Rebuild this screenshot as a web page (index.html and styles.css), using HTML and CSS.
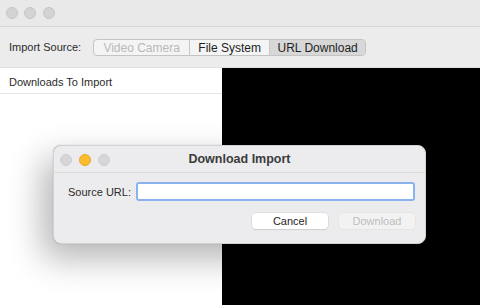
FILE: index.html
```html
<!DOCTYPE html>
<html lang="en">
<head>
    <meta charset="UTF-8">
    <title>Import</title>
    <link rel="stylesheet" href="styles.css">
</head>
<body>
    <div class="window">
        <div class="titlebar">
            <span class="light"></span>
            <span class="light"></span>
            <span class="light"></span>
        </div>

        <div class="toolbar">
            <span class="label">Import Source:</span>
            <div class="segmented">
                <div class="segment disabled">Video Camera</div>
                <div class="segment">File System</div>
                <div class="segment selected">URL Download</div>
            </div>
        </div>

        <div class="content">
            <div class="list">
                <div class="list-header">Downloads To Import</div>
            </div>
            <div class="preview"></div>
        </div>
    </div>

    <div class="dialog">
        <div class="dialog-titlebar">
            <div class="lights">
                <span class="light small"></span>
                <span class="light small yellow"></span>
                <span class="light small"></span>
            </div>
            <div class="dialog-title">Download Import</div>
        </div>
        <div class="dialog-body">
            <div class="field">
                <label for="sourceUrl">Source URL:</label>
                <input type="text" id="sourceUrl">
            </div>
            <div class="buttons">
                <button class="btn">Cancel</button>
                <button class="btn disabled">Download</button>
            </div>
        </div>
    </div>
</body>
</html>
```

FILE: styles.css
```css
body {
    margin: 0;
    width: 480px;
    height: 305px;
    overflow: hidden;
    position: relative;
    font-family: "Liberation Sans", Arial, sans-serif;
    font-size: 11px;
    color: #262626;
    background: #ececec;
}

.window {
    display: flex;
    flex-direction: column;
    height: 305px;
}

.titlebar {
    height: 26px;
    background: #e9e9e9;
    border-bottom: 1px solid #d6d6d6;
    display: flex;
    align-items: center;
    gap: 6.5px;
    padding-left: 5.5px;
}

.light {
    width: 10px;
    height: 10px;
    border-radius: 50%;
    background: #d3d3d3;
    border: 1px solid #c6c6c6;
    box-sizing: content-box;
}

.toolbar {
    height: 40px;
    background: #ececec;
    display: flex;
    align-items: center;
    padding-left: 9px;
    gap: 12px;
}

.label {
    color: #2b2b2b;
}

.segmented {
    display: flex;
    height: 15px;
    border: 1px solid #c4c4c4;
    border-radius: 4px;
    background: #f4f4f4;
    overflow: hidden;
    margin-top: 1px;
}

.segment {
    display: flex;
    align-items: center;
    justify-content: center;
    width: 80px;
    box-sizing: border-box;
    white-space: nowrap;
    border-left: 1px solid #c8c8c8;
    color: #1e1e1e;
    font-size: 12px;
}

.segment:first-child {
    border-left: none;
    width: 95px;
}

.segment.disabled {
    color: #b9b9b9;
}

.segment.selected {
    background: #d7d7d7;
    width: 96px;
}

.content {
    flex: 1;
    display: flex;
    border-top: 1px solid #dedede;
}

.list {
    width: 222px;
    background: #ffffff;
}

.list-header {
    height: 25px;
    line-height: 29px;
    padding-left: 9px;
    border-bottom: 1px solid #e6e6e6;
    color: #2b2b2b;
}

.preview {
    flex: 1;
    background: #000000;
}

/* floating sheet */
.dialog {
    position: absolute;
    left: 53px;
    top: 145px;
    width: 373px;
    height: 99px;
    background: #ececee;
    border-radius: 8px;
    border: 1px solid #d2d2d4;
    box-sizing: border-box;
    box-shadow: -10px 14px 34px rgba(0, 0, 0, 0.3), 0 0 1px rgba(0, 0, 0, 0.3);
}

.dialog-titlebar {
    position: relative;
    height: 26px;
    border-bottom: 1px solid #dcdcdd;
    display: flex;
    align-items: center;
    justify-content: center;
}

.lights {
    position: absolute;
    left: 6px;
    top: 8px;
    display: flex;
    gap: 7px;
}

.light.small {
    width: 10px;
    height: 10px;
    background: #d6d6d8;
    border-color: #cdcdcf;
}

.light.yellow {
    background: #fdbc2f;
    border-color: #e9a91f;
}

.dialog-title {
    font-weight: bold;
    font-size: 12.5px;
    color: #3b3b3b;
}

.dialog-body {
    padding: 9px 10px 0 14px;
}

.field {
    display: flex;
    align-items: center;
    gap: 5px;
}

.field label {
    color: #2b2b2b;
}

.field input {
    flex: 1;
    height: 19px;
    box-sizing: border-box;
    border: 2px solid #8ab2ec;
    border-radius: 3px;
    background: #fff;
    outline: none;
    padding: 0 3px;
}

.buttons {
    display: flex;
    justify-content: flex-end;
    gap: 11px;
    margin-top: 12px;
}

.btn {
    width: 76px;
    height: 16px;
    border: none;
    border-radius: 4px;
    background: #ffffff;
    box-shadow: 0 0 0 0.5px #cfcfcf, 0 1px 1px rgba(0, 0, 0, 0.12);
    font-family: "Liberation Sans", Arial, sans-serif;
    font-size: 11px;
    color: #262626;
    padding: 0;
}

.btn.disabled {
    background: #f2f2f3;
    color: #bdbdbd;
    box-shadow: 0 0 0 0.5px #dedede;
}
```
